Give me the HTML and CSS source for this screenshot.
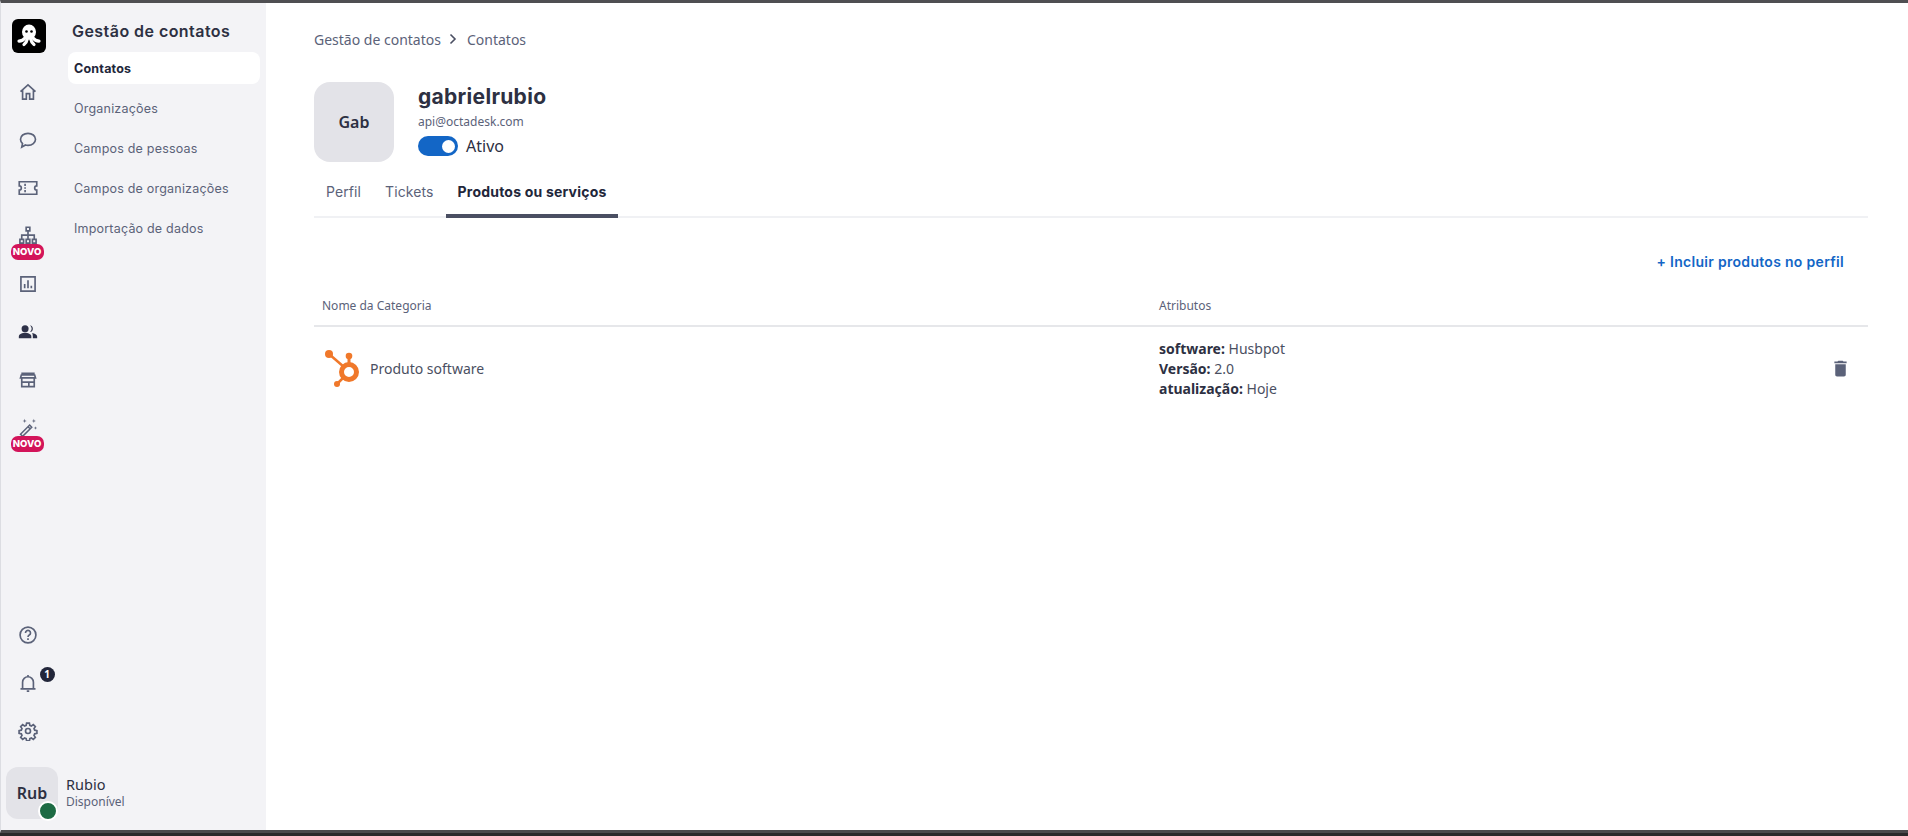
FILE: index.html
```html
<!DOCTYPE html>
<html lang="pt-BR">
<head>
<meta charset="utf-8">
<title>Contatos</title>
<link rel="stylesheet" href="styles.css">
</head>
<body>
<div class="app">
  <nav class="rail">
    <div class="logo">
      <svg viewBox="0 0 34 34" width="34" height="34"><rect width="34" height="34" rx="6" fill="#000"/><ellipse cx="17" cy="13" rx="7" ry="7.500" fill="#fff"/><g fill="none" stroke="#fff" stroke-width="3.200" stroke-linecap="round"><path d="M13 19c-1.500 2-3.500 3-6 3.200"/><path d="M15.500 19.500c-.5 2.500-1.500 4.500-3.500 6"/><path d="M18.500 19.500c.5 2.500 1.500 4.500 3.500 6"/><path d="M21 19c1.500 2 3.500 3 6 3.200"/></g><circle cx="14.500" cy="12.500" r="1.300" fill="#000"/><circle cx="19.500" cy="12.500" r="1.300" fill="#000"/></svg>
    </div>
    <div class="rail-top">
      <a class="rail-item"><svg class="ic" viewBox="0 0 24 24"><path d="M3 11.500 12 3.500l9 8M5.500 10v10.500h4.500v-6.500h4v6.500h4.500V10"/></svg></a>
      <a class="rail-item"><svg class="ic" viewBox="0 0 24 24"><path d="M12 4c5 0 9 3 9 7.200s-4 7.200-9 7.200c-1 0-2-.1-3-.4L4.500 20.500l.9-4.200C4 15 3 13.200 3 11.200 3 7 7 4 12 4z"/></svg></a>
      <a class="rail-item"><svg class="ic" viewBox="0 0 24 24"><path d="M1.500 4.500h21v5a2.500 2.500 0 0 0 0 5v5h-21v-5a2.500 2.500 0 0 0 0-5zM8.500 7v2.500M8.500 11v2M8.500 14.500V17"/></svg></a>
      <a class="rail-item has-new"><svg class="ic" viewBox="0 0 24 24"><path d="M9.800 1.500h4.400v4.400H9.800zM12 5.900v5M4.500 16v-5h15v5M12 11v5M2.300 16h4.400v4.500H2.300zM9.800 16h4.400v4.500H9.800zM17.300 16h4.400v4.500h-4.400z"/></svg><span class="new">NOVO</span></a>
      <a class="rail-item"><svg class="ic" viewBox="0 0 24 24"><path d="M3.500 3.500h17v17h-17zM8 17v-5M12 17V7.500M16 17v-3"/></svg></a>
      <a class="rail-item"><svg class="ic solid" viewBox="0 0 24 24"><circle cx="8.500" cy="8" r="4.200"/><path d="M1 19.500v-2c0-3 4.500-4.500 7.500-4.500s7.500 1.500 7.500 4.500v2z"/><path d="M14.500 3.900a4.200 4.200 0 0 1 0 8.200 6 6 0 0 0 0-8.200zM17 13.300c3 .5 6 1.800 6 4.200v2h-5.200v-2c0-1.700-.3-3-.8-4.200z"/></svg></a>
      <a class="rail-item"><svg class="ic" viewBox="0 0 24 24"><path d="M4 4h16M4.500 9.500V20h15V9.500M3 9.500 4 6h16l1 3.500zM4.500 14.500h15M13 14.500V20"/></svg></a>
      <a class="rail-item has-new"><svg class="ic thin" viewBox="0 0 24 24"><path d="m3 19.500 11-11 2.500 2.500-11 11zM12 10.500l2.500 2.500"/><path class="spark" d="M8 1l.6 1.900 1.900.6-1.900.6L8 6l-.6-1.900-1.900-.6 1.900-.6zM19 1l.6 1.900 1.900.6-1.900.6L19 6l-.6-1.900-1.900-.6 1.900-.6zM21 10l.5 1.500 1.500.5-1.500.5-.5 1.500-.5-1.500-1.500-.5 1.500-.5z"/></svg><span class="new">NOVO</span></a>
    </div>
    <div class="rail-bottom">
      <a class="rail-item"><svg class="ic" viewBox="0 0 24 24"><circle cx="12" cy="12" r="9.500"/><path d="M9 9.500a3 3 0 1 1 4.500 2.600c-1 .6-1.500 1.100-1.500 2.200M12 16v2"/></svg></a>
      <a class="rail-item"><svg class="ic" viewBox="0 0 24 24"><path d="M3 19h18M5.500 19v-8a6.500 6.500 0 0 1 13 0v8M12 2.500v2M10.500 21.800h3"/></svg><span class="count">1</span></a>
      <a class="rail-item"><svg class="ic" viewBox="0 0 24 24"><circle cx="12" cy="12" r="3"/><path d="M10.300 2.500h3.400l.5 2.700 1.900.8 2.300-1.600 2.400 2.400-1.600 2.300.8 1.900 2.700.5v3.400l-2.700.5-.8 1.900 1.600 2.300-2.400 2.400-2.300-1.600-1.900.8-.5 2.700h-3.400l-.5-2.700-1.900-.8-2.300 1.600-2.400-2.400 1.600-2.300-.8-1.900-2.700-.5v-3.400l2.700-.5.8-1.900-1.600-2.300 2.400-2.400 2.300 1.600 1.900-.8z"/></svg></a>
    </div>
  </nav>
  <aside class="submenu">
    <h2 class="submenu-title">Gestão de contatos</h2>
    <a class="submenu-item active">Contatos</a>
    <a class="submenu-item">Organizações</a>
    <a class="submenu-item">Campos de pessoas</a>
    <a class="submenu-item">Campos de organizações</a>
    <a class="submenu-item">Importação de dados</a>
  </aside>
  <div class="user">
    <div class="user-avatar">Rub<span class="status"></span></div>
    <div class="user-text"><div class="user-name">Rubio</div><div class="user-state">Disponível</div></div>
  </div>
  <main class="main">
    <div class="crumbs"><span>Gestão de contatos</span><svg class="chev" viewBox="0 0 10 12" width="10" height="12"><path d="m2.500 1.500 4.500 4.500-4.500 4.500"/></svg><span class="crumb-2">Contatos</span></div>
    <header class="profile">
      <div class="avatar">Gab</div>
      <div class="profile-info">
        <h1 class="name">gabrielrubio</h1>
        <div class="email">api@octadesk.com</div>
        <div class="toggle-row"><span class="toggle"><span class="knob"></span></span><span class="toggle-label">Ativo</span></div>
      </div>
    </header>
    <div class="tabs">
      <a class="tab">Perfil</a>
      <a class="tab">Tickets</a>
      <a class="tab active">Produtos ou serviços</a>
    </div>
    <div class="actions"><a class="include">+ Incluir produtos no perfil</a></div>
    <div class="row head">
      <div class="col-a">Nome da Categoria</div>
      <div class="col-b">Atributos</div>
    </div>
    <div class="row item">
      <div class="col-a product">
        <svg class="hub" viewBox="0 0 38 40" width="38" height="40"><g fill="none" stroke="#f0782a"><circle cx="25" cy="23" r="7.500" stroke-width="5"/><path d="M5 5 20 18" stroke-width="2.500"/><path d="M25 7v8" stroke-width="3"/><path d="M13 35l6-6" stroke-width="2.500"/></g><g fill="#f0782a"><circle cx="5" cy="5" r="4"/><circle cx="25" cy="7" r="3.300"/><circle cx="13" cy="35" r="3"/></g></svg>
        <span>Produto software</span>
      </div>
      <div class="col-b attrs">
        <div><b>software:</b> Husbpot</div>
        <div><b>Versão:</b> 2.0</div>
        <div><b>atualização:</b> Hoje</div>
      </div>
      <svg class="trash" viewBox="0 0 24 24" width="21" height="21"><path d="M6 19c0 1.100.9 2 2 2h8c1.100 0 2-.9 2-2V7H6zM19 4h-3.500l-1-1h-5l-1 1H5v2h14z"/></svg>
    </div>
  </main>
</div>
</body>
</html>
```

FILE: styles.css
```css
* { box-sizing: border-box; }
html, body { margin: 0; height: 100%; }
body { background: #fff; font-family: "Noto Sans", "Open Sans", sans-serif; color: #22263a; overflow: hidden; border-bottom: 3px solid #2a2a2b; }
.app { position: relative; display: flex; height: 833px; border-top: 3px solid #4f4f52; border-bottom: 3px solid #4a4a4c; border-left: 1px solid #dcdde2; }
.rail { width: 53px; background: #f3f3f6; display: flex; flex-direction: column; align-items: center; padding: 16px 0 0 0; flex: none; }
.logo { height: 34px; margin-left: 3px; }
.rail-top { margin-top: 15px; display: flex; flex-direction: column; align-items: center; }
.rail-bottom { margin-top: 159px; display: flex; flex-direction: column; align-items: center; }
.rail-item { position: relative; width: 48px; height: 48px; display: flex; align-items: center; justify-content: center; }
.ic { width: 20px; height: 20px; fill: none; stroke: #5b6279; stroke-width: 2; }
.ic.solid { fill: #2d3148; stroke: none; }
.ic.thin { stroke-width: 1.800; }
.spark { fill: #5b6279; stroke: none; }
.new { position: absolute; left: 7px; top: 32px; width: 33px; height: 16px; border-radius: 7px; background: #d3145a; color: #fff; font-size: 9.500px; font-weight: 800; line-height: 16px; text-align: center; font-family: "Inter", sans-serif; }
.count { position: absolute; left: 36px; top: 8px; width: 15px; height: 15px; border-radius: 50%; background: #22263a; color: #fff; font-size: 10px; font-weight: 700; line-height: 15px; text-align: center; }
.submenu { width: 212px; background: #f3f3f6; padding: 16px 6px 0 14px; flex: none; font-family: "Inter", sans-serif; }
.submenu-title { margin: 0 0 9px; padding-left: 4px; font-size: 16px; line-height: 24px; font-weight: 600; letter-spacing: .45px; color: #2d3042; }
.submenu-item { display: flex; align-items: center; height: 32px; margin-bottom: 8px; padding-left: 6px; border-radius: 8px; font-size: 12.500px; color: #5b6279; letter-spacing: .2px; }
.submenu-item.active { background: #fff; color: #22263a; font-weight: 700; }
.user { position: absolute; left: 5px; bottom: 11px; display: flex; align-items: center; gap: 8px; }
.user-avatar { position: relative; width: 52px; height: 52px; border-radius: 12px; background: #e3e3e8; display: flex; align-items: center; justify-content: center; font-size: 16px; font-weight: 600; color: #2d3042; }
.status { position: absolute; right: 0; bottom: -2px; width: 20px; height: 20px; border-radius: 50%; background: #1d6b44; border: 2px solid #fff; }
.user-name { font-size: 14.500px; line-height: 18px; color: #2d3042; }
.user-state { font-size: 12px; line-height: 18px; color: #5b6279; }
.main { flex: 1; min-width: 0; padding: 25px 40px 0 48px; }
.crumbs { display: flex; align-items: center; height: 22px; font-size: 14px; color: #5b6279; }
.chev { margin: 0 9px 0 7px; fill: none; stroke: #4a4f62; stroke-width: 1.600; }
.profile { display: flex; margin-top: 32px; gap: 24px; }
.avatar { width: 80px; height: 80px; border-radius: 16px; background: #e3e3e8; display: flex; align-items: center; justify-content: center; font-size: 16px; font-weight: 600; color: #2d3042; }
.name { margin: 0; font-family: "Inter", sans-serif; font-size: 21px; line-height: 30px; font-weight: 700; letter-spacing: .3px; color: #2d3042; }
.email { font-size: 12px; line-height: 17px; margin-top: 1px; color: #5b6279; }
.toggle-row { display: flex; align-items: center; gap: 8px; margin-top: 6px; }
.toggle { width: 40px; height: 20px; border-radius: 10px; background: #1366c6; display: flex; align-items: center; justify-content: flex-end; padding-right: 3px; }
.knob { width: 13px; height: 13px; border-radius: 50%; background: #fff; }
.toggle-label { font-size: 16px; line-height: 20px; color: #2d3042; }
.tabs { display: flex; margin-top: 13px; border-bottom: 2px solid #f0f1f4; height: 43px; font-family: "Inter", sans-serif; }
.tab { height: 43px; padding: 8px 12px 0; line-height: 18px; font-size: 14px; letter-spacing: .1px; color: #5b6279; }
.tab.active { color: #22263a; font-weight: 700; letter-spacing: .2px; border-bottom: 4px solid #4a4f62; }
.actions { display: flex; justify-content: flex-end; padding: 34px 24px 0 0; }
.include { font-family: "Inter", sans-serif; font-size: 14px; line-height: 20px; font-weight: 600; letter-spacing: .3px; color: #1366c6; }
.row { display: flex; align-items: center; }
.col-a { width: 845px; flex: none; padding-left: 8px; }
.head { height: 42px; margin-top: 13px; border-bottom: 2px solid #e6e7ea; font-size: 12px; color: #5b6279; }
.item { height: 83px; font-size: 14px; color: #4a4f62; }
.product { display: flex; align-items: center; gap: 8px; }
.hub { flex: none; margin-left: 2px; }
.attrs { line-height: 20px; color: #4a4f62; }
.attrs b { color: #2d3042; font-weight: 700; }
.trash { margin-left: auto; margin-right: 17px; fill: #5b6279; }
```
